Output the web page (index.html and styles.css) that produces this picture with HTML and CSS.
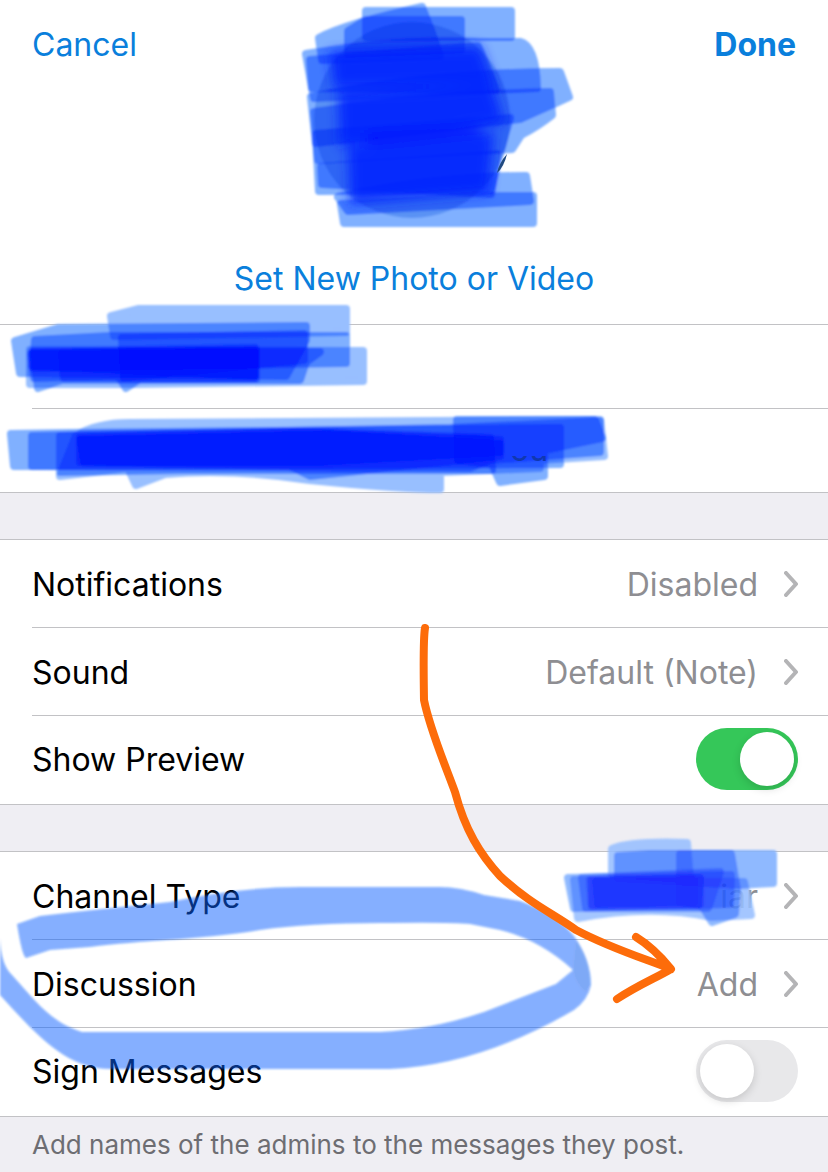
FILE: index.html
```html
<!DOCTYPE html>
<html lang="en">
<head>
    <meta charset="UTF-8">
    <meta name="viewport" content="width=device-width, initial-scale=1.0">
    <title>Edit Channel</title>
    <link rel="stylesheet" href="styles.css">
</head>
<body>
<main class="screen">
    <header class="top">
        <nav class="nav">
            <button class="link" type="button">Cancel</button>
            <button class="link done" type="button">Done</button>
        </nav>
        <button class="link photo-link" type="button">Set New Photo or Video</button>
    </header>

    <section class="fields">
        <input class="field" type="text" aria-label="Channel name">
        <input class="field" type="text" aria-label="Description">
    </section>

    <section class="group">
        <button class="row" type="button">
            <span>Notifications</span>
            <span class="value">Disabled</span>
            <svg class="chevron" viewBox="0 0 14 26"><path d="M2 2L12 13L2 24"/></svg>
        </button>
        <button class="row" type="button">
            <span>Sound</span>
            <span class="value">Default (Note)</span>
            <svg class="chevron" viewBox="0 0 14 26"><path d="M2 2L12 13L2 24"/></svg>
        </button>
        <label class="row">
            <span>Show Preview</span>
            <input class="switch" type="checkbox" checked>
        </label>
    </section>

    <section class="group">
        <button class="row" type="button">
            <span>Channel Type</span>
            <span class="value">iar</span>
            <svg class="chevron" viewBox="0 0 14 26"><path d="M2 2L12 13L2 24"/></svg>
        </button>
        <button class="row" type="button">
            <span>Discussion</span>
            <span class="value">Add</span>
            <svg class="chevron" viewBox="0 0 14 26"><path d="M2 2L12 13L2 24"/></svg>
        </button>
        <label class="row">
            <span>Sign Messages</span>
            <input class="switch" type="checkbox">
        </label>
    </section>
    <p class="note">Add names of the admins to the messages they post.</p>

    <!-- Hand-drawn markup over the screen -->
    <svg class="markup" viewBox="0 0 828 1172" aria-hidden="true">
        <defs>
            <filter id="soft"><feGaussianBlur stdDeviation="1"/></filter>
            <filter id="softer"><feGaussianBlur stdDeviation="6"/></filter>
            <clipPath id="under-stroke"><path d="M500 456H560V480H500Z"/></clipPath>
        </defs>

        <!-- Photo -->
        <g class="scribble">
            <circle class="photo" cx="412" cy="120" r="98"/>
            <path d="M366 11H511V37H366Z"/>
            <path d="M319 38Q345 24 422 7L431 30L440 56L322 60Z"/>
            <path d="M348 31L366 20H461V50L348 54Z"/>
            <path d="M306 54Q400 38 480 42H520Q536 46 537 88L314 98Z"/>
            <path d="M310 60L478 46L496 90L312 88Z"/>
            <path d="M311 97Q430 72 560 72L569 97Q550 106 520 119L316 143Z"/>
            <path d="M314 112Q440 94 550 92L552 115Q538 126 521 135L512 149L318 160Z"/>
            <path d="M316 134L510 118L498 160L491 190L319 191Z"/>
            <path d="M321 167L497 154L491 194L322 184Z"/>
            <path d="M338 197Q430 176 526 176L530 201L348 211Z"/>
            <path d="M341 204L500 196H533V223H344Z"/>
        </g>
        <g class="dark">
            <path d="M330 52L480 46L494 84L334 88Z"/>
            <path d="M338 92L492 84L504 122L340 146Z"/>
            <path class="deep" d="M366 134L480 128L486 180L368 184Z"/>
            <path d="M348 146L494 132L488 192L350 204Z"/>
        </g>
        <path class="sliver" d="M507 154Q504 167 497 173Q499 163 507 154Z"/>

        <!-- Name -->
        <g class="scribble">
            <path class="pale" d="M111 316L138 309H346V332L114 336Z"/>
            <path d="M15 341L58 328L306 326V340L286 376L20 373Z"/>
            <path d="M35 340L110 336H346V363L33 368Z"/>
            <path d="M33 352H320L306 362L300 380H62L38 388Z"/>
            <path class="pale" d="M30 350L363 351V381L130 384L30 384Z"/>
            <path d="M31 354L256 350V379L140 379L126 388L118 376L34 378Z"/>
            <path d="M32 352L255 348V376L32 366Z"/>
            <path d="M122 338L304 334V360L124 378Z"/>
            <path d="M62 354L254 352V378L64 378Z"/>
        </g>

        <!-- Description -->
        <g class="scribble">
            <path d="M11 434L70 433L560 428V464L14 466Z"/>
            <path class="pale" d="M76 436Q96 423 130 423L600 420L604 456L540 460L540 468L440 472V489Q400 489 310 480Q230 468 165 474L136 485L128 468L60 476Z"/>
            <path d="M32 436L450 428L600 421L600 452L490 460L470 468L32 466Z"/>
            <path d="M457 420L595 420L602 438L544 450L544 476L500 482L492 464L458 460Z"/>
            <path d="M60 436L320 432L490 438L492 470L180 470L60 472Z"/>
            <path d="M80 438L300 432L500 440V456L310 476L290 466L84 462Z"/>
            <path d="M80 440L330 434L500 444V452L320 462L80 462Z"/>
        </g>
        <text class="leftover" x="510" y="461" clip-path="url(#under-stroke)">ou</text>

        <!-- Channel type -->
        <g class="scribble light">
            <path class="pale" d="M612 849Q630 841 687 843L690 880L612 874Z"/>
            <path d="M618 856L650 854H773V883L740 885L618 878Z"/>
            <path d="M568 878L731 875L730 904L574 908Z"/>
            <path class="pale" d="M574 880L744 882L751 915L712 917Q650 904 578 918Z"/>
            <path d="M680 854L731 854L737 890L735 914L712 922L702 906L680 902Z"/>
            <path d="M582 878L720 872L708 908L586 908Z"/>
            <path d="M590 880L700 878L698 906L592 906Z"/>
            <path d="M592 880L700 878V904L592 905Z"/>
            <path d="M596 882L694 880V902L598 904Z"/>
        </g>

        <!-- Ring round Discussion -->
        <g class="ring">
            <path d="M17 924L40 916Q100 909 170 902Q240 887 300 887H440Q460 887 484 895L520 901Q556 914 574 936Q591 960 591 985Q588 1000 574 1010Q480 1065 390 1069H110C70 1068 45 1045 0 995V938Q1 965 12 975C35 1000 50 1022 82 1032H380Q430 1030 484 1012L556 984L573 970Q540 940 500 930L470 924Q450 922 380 923Q310 923 260 930C200 940 140 940 90 947L50 950L26 958Q22 956 17 924Z"/>
            <path class="fold" d="M576 940Q591 960 590 985L586 992Q576 985 573 970Z"/>
        </g>

        <!-- Arrow pointing at Add -->
        <path class="arrow" d="M425 628Q423 640 424 700C430 730 446 767 455 792C465 830 480 854 500 876C530 904 554 914 576 930C610 948 640 957 671 969Q654 948 636 937M671 969C656 978 640 984 617 999"/>
    </svg>
</main>
</body>
</html>
```
FILE: styles.css
```css
body {
    margin: 0;
    background-color: #efeef3;
    font-family: Inter, "Liberation Sans", sans-serif;
    font-size: 32px;
    line-height: 40px;
    color: #000;
}
.screen {
    position: relative;
    overflow: hidden;
}
.top {
    display: flex;
    flex-direction: column;
    height: 324px;
    background-color: #fff;
}
.nav {
    display: flex;
    justify-content: space-between;
    padding: 25px 32px 0;
}
button {
    font: inherit;
    border: none;
    background: none;
    padding: 0;
    cursor: pointer;
}
.link {
    color: #0a7fdc;
}
.done {
    font-weight: 700;
}
.photo-link {
    margin: auto auto 25px;
}
/* Name and description */
.fields {
    display: flex;
    flex-direction: column;
    padding-left: 32px;
    background-color: #fff;
    border-top: 1px solid #c2c2c5;
    border-bottom: 1px solid #c2c2c5;
}
.field {
    height: 83px;
    padding: 0;
    border: none;
    outline: none;
    font: inherit;
}
.field + .field {
    border-top: 1px solid #c2c2c5;
}
/* Setting rows */
.group {
    margin-top: 46px;
    padding-left: 32px;
    background-color: #fff;
    border-top: 1px solid #c2c2c5;
    border-bottom: 1px solid #c2c2c5;
}
.row {
    display: flex;
    align-items: center;
    justify-content: space-between;
    box-sizing: border-box;
    width: 100%;
    height: 88px;
    padding-right: 30px;
    color: #000;
}
.row:first-child {
    height: 87px;
}
.row:last-child {
    height: 89px;
    padding-bottom: 2px;
}
.row + .row {
    border-top: 1px solid #c2c2c5;
}
.row span {
    padding-top: 2px;
}
.value {
    margin-left: auto;
    color: #8e8e92;
}
.chevron {
    width: 14px;
    height: 26px;
    margin-left: 26px;
}
.chevron path {
    fill: none;
    stroke: #b4b4b6;
    stroke-width: 4;
    stroke-linecap: round;
    stroke-linejoin: round;
}
.switch {
    appearance: none;
    display: flex;
    align-items: center;
    box-sizing: border-box;
    width: 102px;
    height: 62px;
    margin: 0;
    padding: 4px;
    border-radius: 31px;
    background-color: #e8e8ea;
    cursor: pointer;
}
.switch::before {
    content: "";
    width: 54px;
    height: 54px;
    border-radius: 50%;
    background-color: #fff;
    box-shadow: 0 3px 8px rgba(0, 0, 0, 0.15);
}
.switch:checked {
    justify-content: flex-end;
    background-color: #35c759;
}
.note {
    margin: 0;
    padding: 11px 32px 10px;
    font-size: 26px;
    line-height: 34px;
    color: #6d6d72;
}
/* Markup layer */
.markup {
    position: absolute;
    top: 0;
    left: 0;
    width: 100%;
    pointer-events: none;
}
.scribble {
    isolation: isolate;
    filter: url(#soft);
}
.scribble path {
    fill: #80b0ff;
    stroke: #80b0ff;
    stroke-width: 8;
    stroke-linejoin: round;
    mix-blend-mode: multiply;
}
.scribble .pale {
    fill: #98bfff;
    stroke: #98bfff;
}
.light {
    opacity: 0.88;
}
.scribble .photo {
    fill: #b4d4f4;
}
.dark {
    fill: #0020ff;
    opacity: 0.85;
    filter: url(#softer);
}
.deep {
    fill: #0000ff;
}
.sliver {
    fill: #204a80;
}
.leftover {
    font-size: 32px;
    fill: #1038b0;
}
.ring {
    fill: #0a62ff;
    opacity: 0.5;
    filter: url(#soft);
}
.fold {
    fill: #003cc8;
    opacity: 0.3;
}
.arrow {
    fill: none;
    stroke: #fd6c0a;
    stroke-width: 8;
    stroke-linecap: round;
    stroke-linejoin: round;
}
```
